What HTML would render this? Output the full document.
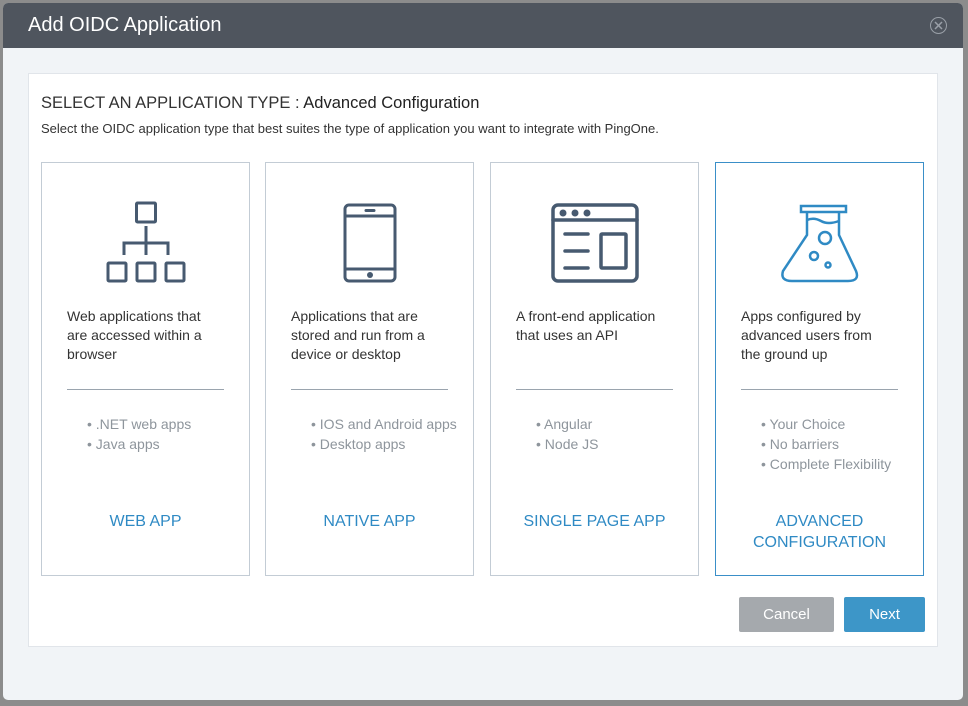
<!DOCTYPE html>
<html><head><style>
body{margin:0;width:968px;height:706px;background:#8c8c8c;font-family:"Liberation Sans",sans-serif;position:relative;overflow:hidden}
.modal{position:absolute;left:3px;top:3px;width:960px;height:697px;background:#f1f4f7;border-radius:5px;overflow:hidden}
.hdr{height:45px;background:#4f555e;color:#fff;font-size:20px;line-height:44px;padding-left:25px}
.close{position:absolute;right:16px;top:14px;width:15px;height:15px;border:1.5px solid #9aa0a8;border-radius:50%}
.panel{position:absolute;left:25px;top:70px;width:908px;height:572px;background:#fff;border:1px solid #e1e5ea}
h1{position:absolute;left:12px;top:20px;margin:0;font-weight:normal;font-size:16.5px;color:#333}
.sub{position:absolute;left:12px;top:47px;font-size:13px;color:#333}
.card{position:absolute;top:88px;width:207px;height:412px;border:1px solid #c3ccd5;background:#fff}
.card.sel{border:1px solid #3a8fc8}
.icon{position:absolute;left:0;width:100%;top:38px;height:84px;text-align:center}
.desc{position:absolute;left:25px;top:144px;width:150px;font-size:14px;line-height:19px;color:#333}
.hr{position:absolute;left:25px;width:157px;top:226px;border-top:1px solid #9aa4ae}
.list{position:absolute;left:45px;top:251px;font-size:14px;line-height:20px;color:#8e959c}
.t{position:absolute;left:0;width:100%;top:348px;text-align:center;color:#2f8ac4;font-size:16px;line-height:21px}
.btn{position:absolute;top:523px;height:35px;border-radius:2px;color:#fff;font-size:15px;text-align:center;line-height:35px}
</style></head><body>
<div class="modal">
<div class="hdr">Add OIDC Application</div>
<div class="close"><svg width="15" height="15" style="position:absolute;left:0;top:0"><path d="M4 4L11 11M11 4L4 11" stroke="#9aa0a8" stroke-width="1.5"/></svg></div>
<div class="panel">
<h1>SELECT AN APPLICATION TYPE : <span style="color:#222">Advanced Configuration</span></h1>
<div class="sub">Select the OIDC application type that best suites the type of application you want to integrate with PingOne.</div>

<div class="card" style="left:12px">
<div class="icon"><svg width="84" height="84" viewBox="0 0 84 84"><g fill="none" stroke="#475a70" stroke-width="3"><rect x="32.5" y="2" width="19" height="19" rx="1"/><path d="M42 25V54M20 54V42H64V54"/><rect x="4" y="62" width="18" height="18" rx="1"/><rect x="33" y="62" width="18" height="18" rx="1"/><rect x="62" y="62" width="18" height="18" rx="1"/></g></svg></div>
<div class="desc">Web applications that are accessed within a browser</div><div class="hr"></div>
<div class="list">• .NET web apps<br>• Java apps</div>
<div class="t">WEB APP</div></div>

<div class="card" style="left:236px">
<div class="icon"><svg width="84" height="84" viewBox="0 0 84 84"><g fill="none" stroke="#475a70" stroke-width="3"><rect x="17" y="4" width="50" height="76" rx="4"/><path d="M17 15H67M17 68H67"/><path d="M38 9.5H46" stroke-linecap="round"/></g><circle cx="42" cy="74" r="3" fill="#475a70"/></svg></div>
<div class="desc">Applications that are stored and run from a device or desktop</div><div class="hr"></div>
<div class="list">• IOS and Android apps<br>• Desktop apps</div>
<div class="t">NATIVE APP</div></div>

<div class="card" style="left:461px">
<div class="icon"><svg width="90" height="84" viewBox="0 0 90 84"><g fill="none" stroke="#475a70" stroke-width="3.5" stroke-linecap="round"><rect x="3" y="4" width="84" height="76" rx="5"/><path d="M3 19H87M15 33H38M15 50H38M15 67H38"/><rect x="51" y="33" width="25" height="34" rx="1"/></g><g fill="#475a70"><circle cx="13" cy="12" r="3.5"/><circle cx="25" cy="12" r="3.5"/><circle cx="37" cy="12" r="3.5"/></g></svg></div>
<div class="desc">A front-end application that uses an API</div><div class="hr"></div>
<div class="list">• Angular<br>• Node JS</div>
<div class="t">SINGLE PAGE APP</div></div>

<div class="card sel" style="left:686px">
<div class="icon"><svg width="84" height="84" viewBox="0 0 84 84"><g fill="none" stroke="#2f8ac4" stroke-width="2.5"><rect x="23" y="5" width="45" height="6"/><path d="M29 11V34L5 70Q2 80 14 80H70Q82 80 78 70L61 34V11"/><path d="M29 19Q36 16 43 20Q50 24 61 20"/><circle cx="47" cy="37" r="6"/><circle cx="36" cy="55" r="4"/><circle cx="50" cy="64" r="2.5"/></g></svg></div>
<div class="desc">Apps configured by advanced users from the ground up</div><div class="hr"></div>
<div class="list">• Your Choice<br>• No barriers<br>• Complete Flexibility</div>
<div class="t">ADVANCED<br>CONFIGURATION</div></div>

<div class="btn" style="left:710px;width:95px;background:#a5a9ad">Cancel</div>
<div class="btn" style="left:815px;width:81px;background:#3d96c8">Next</div>
</div></div>
</body></html>
